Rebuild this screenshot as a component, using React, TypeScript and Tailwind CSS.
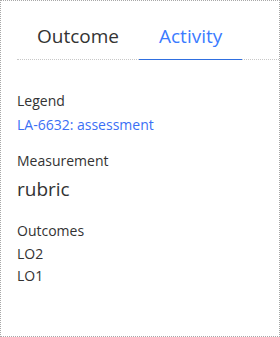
export default function App() {
  return (
    <div
      className="w-[280px] h-[337px] border border-dotted border-[#a8a8a8] bg-white text-[#333]"
      style={{ fontFamily: '"Open Sans", "Noto Sans", sans-serif' }}
    >
      <div className="ml-4 mt-[20px] flex border-b border-dotted border-[#c8c8c8]">
        <button className="px-5 pb-[8px] text-[19px] leading-[30px] text-[#333]">Outcome</button>
        <button className="-mb-px border-b border-[#2f6fe0] px-5 pb-[8px] text-[19px] leading-[30px] text-[#3b7bff]">
          Activity
        </button>
      </div>

      <div className="px-4 pt-[32px] text-[14px] leading-[17px]">
        <div>
          <div>Legend</div>
          <div className="mt-[7px] text-[#3b6ff5]">LA-6632: assessment</div>
        </div>
        <div className="mt-[19px]">
          <div>Measurement</div>
          <div className="mt-[8px] text-[19px] leading-[24px]">rubric</div>
        </div>
        <div className="mt-[19px] leading-[22.5px]">
          <div>Outcomes</div>
          <div>LO2</div>
          <div>LO1</div>
        </div>
      </div>
    </div>
  );
}
